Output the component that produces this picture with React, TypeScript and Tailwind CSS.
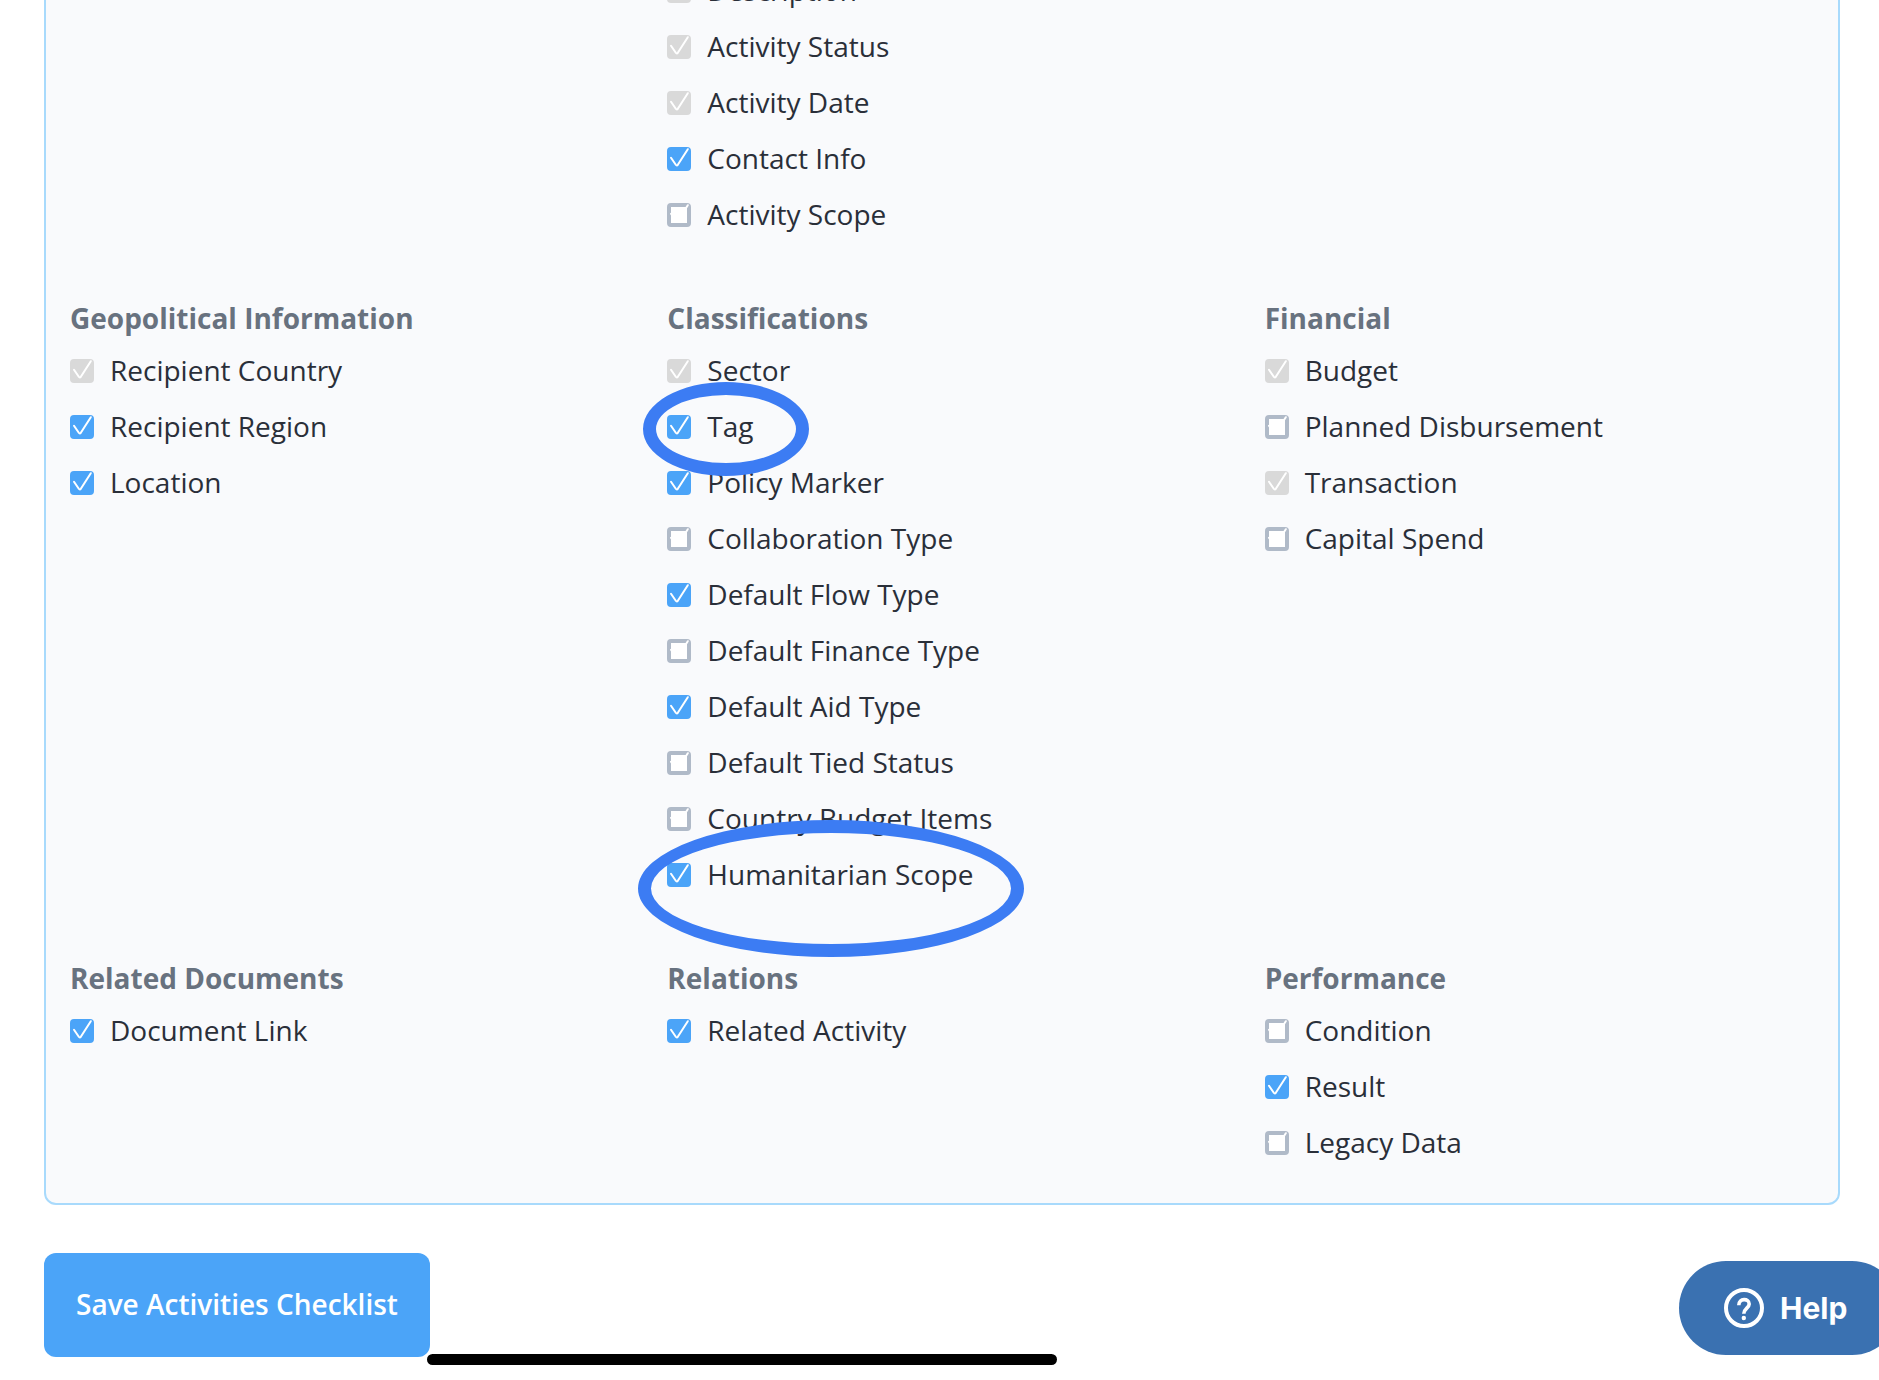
import React from 'react';

interface Item {
  label: string;
  checked?: boolean;
  locked?: boolean;
  circle?: string;
}

interface Group {
  title?: string;
  items: Item[];
}

const groups: Group[] = [
  { items: [] },
  {
    items: [
      { label: 'Description', locked: true },
      { label: 'Activity Status', locked: true },
      { label: 'Activity Date', locked: true },
      { label: 'Contact Info', checked: true },
      { label: 'Activity Scope' },
    ],
  },
  { items: [] },
  {
    title: 'Geopolitical Information',
    items: [
      { label: 'Recipient Country', locked: true },
      { label: 'Recipient Region', checked: true },
      { label: 'Location', checked: true },
    ],
  },
  {
    title: 'Classifications',
    items: [
      { label: 'Sector', locked: true },
      { label: 'Tag', checked: true, circle: '-left-6 -top-[25px] h-[94px] w-[166px]' },
      { label: 'Policy Marker', checked: true },
      { label: 'Collaboration Type' },
      { label: 'Default Flow Type', checked: true },
      { label: 'Default Finance Type' },
      { label: 'Default Aid Type', checked: true },
      { label: 'Default Tied Status' },
      { label: 'Country Budget Items' },
      { label: 'Humanitarian Scope', checked: true, circle: '-left-[29px] -top-[35px] h-[137px] w-[386px]' },
    ],
  },
  {
    title: 'Financial',
    items: [
      { label: 'Budget', locked: true },
      { label: 'Planned Disbursement' },
      { label: 'Transaction', locked: true },
      { label: 'Capital Spend' },
    ],
  },
  {
    title: 'Related Documents',
    items: [{ label: 'Document Link', checked: true }],
  },
  {
    title: 'Relations',
    items: [{ label: 'Related Activity', checked: true }],
  },
  {
    title: 'Performance',
    items: [{ label: 'Condition' }, { label: 'Result', checked: true }, { label: 'Legacy Data' }],
  },
];

const CheckItem: React.FC<{ item: Item }> = ({ item }) => (
  <li className="relative">
    <label className="flex items-center gap-4">
      <span className="relative h-6 w-6 flex-shrink-0">
        <input
          type="checkbox"
          defaultChecked={item.checked || item.locked}
          disabled={item.locked}
          className="block h-6 w-6 appearance-none rounded border-4 border-[#b0bac8] bg-white checked:border-[#4ba4f8] checked:bg-[#4ba4f8] disabled:border-[#d9d9d9] disabled:bg-[#d9d9d9]"
        />
        <svg
          viewBox="0 0 24 24"
          className="pointer-events-none absolute inset-0 h-6 w-6"
          fill="none"
          stroke="#fff"
          strokeWidth="2"
          strokeLinecap="round"
          strokeLinejoin="round"
        >
          <path d="M4 10.8L8.8 17.8Q9.8 19.2 10.8 17.8L20.8 2.2" />
        </svg>
      </span>
      <span className="pb-0.5">{item.label}</span>
    </label>
    {item.circle && (
      <span className={`pointer-events-none absolute z-10 rounded-[50%] border-[13px] border-[#3c7cf3] ${item.circle}`} />
    )}
  </li>
);

const App: React.FC = () => {
  return (
    <div className="relative min-h-screen overflow-hidden bg-white px-11 pb-5 font-['Open_Sans',sans-serif] text-[28px] leading-[38px] text-[#2a2f39]">
      <main>
        {/* the checklist is scrolled, so its first row is cut by the top edge */}
        <section className="-mt-[31px] mr-[-5px] grid grid-cols-3 gap-y-16 rounded-xl border-2 border-[#a8dafc] bg-[#f9fafc] pb-10">
          {groups.map((group, i) => (
            <div key={i} className="px-6">
              {group.title && <h2 className="mb-3 pb-0.5 font-bold text-[#68727f]">{group.title}</h2>}
              <ul className="flex flex-col gap-4">
                {group.items.map((item) => (
                  <CheckItem key={item.label} item={item} />
                ))}
              </ul>
            </div>
          ))}
        </section>
        <button type="button" className="mt-12 flex h-[104px] items-center rounded-xl bg-[#4ba4f8] px-8 font-semibold text-white">
          <span className="pb-0.5">Save Activities Checklist</span>
        </button>
      </main>

      <div className="fixed bottom-[15px] left-[427px] h-[11px] w-[630px] rounded-full bg-black" />

      <button
        type="button"
        className="fixed -right-5 bottom-[25px] flex h-[94px] w-[220px] items-center gap-4 rounded-full bg-[#3a71b1] pl-[45px] font-['Inter',sans-serif] text-[30px] font-bold text-white"
      >
        <svg viewBox="0 0 40 40" className="h-10 w-10" fill="none" stroke="#fff" strokeWidth="4">
          <circle cx="20" cy="20" r="18" />
          <path d="M14.8 17.2C14.8 10 25.2 10 25.2 16C25.2 20 19.8 20.5 19.8 25.8" strokeWidth="3.6" />
          <circle cx="19.8" cy="30" r="2.2" fill="#fff" stroke="none" />
        </svg>
        Help
      </button>
    </div>
  );
};

export default App;
